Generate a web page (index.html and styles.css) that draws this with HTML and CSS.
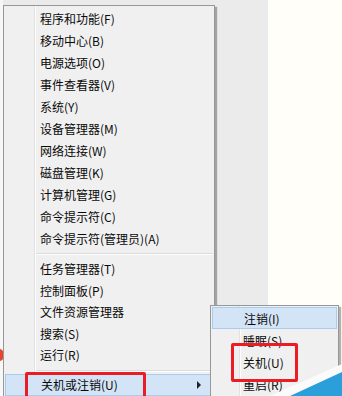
FILE: index.html
```html
<!DOCTYPE html>
<html lang="zh-CN">

<head>
    <meta charset="UTF-8">
    <meta name="viewport" content="width=device-width, initial-scale=1.0">
    <title>Win+X 菜单</title>
    <link rel="stylesheet" href="styles.css">
</head>

<body>
    <div class="screen">
        <span class="red-dot"></span>

        <!-- 主菜单 -->
        <div class="menu main-menu">
            <div class="group">
                <div class="item">程序和功能(F)</div>
                <div class="item">移动中心(B)</div>
                <div class="item">电源选项(O)</div>
                <div class="item">事件查看器(V)</div>
                <div class="item">系统(Y)</div>
                <div class="item">设备管理器(M)</div>
                <div class="item">网络连接(W)</div>
                <div class="item">磁盘管理(K)</div>
                <div class="item">计算机管理(G)</div>
                <div class="item">命令提示符(C)</div>
                <div class="item">命令提示符(管理员)(A)</div>
            </div>
            <div class="sep"></div>
            <div class="group tight">
                <div class="item">任务管理器(T)</div>
                <div class="item">控制面板(P)</div>
                <div class="item">文件资源管理器</div>
                <div class="item">搜索(S)</div>
                <div class="item">运行(R)</div>
            </div>
            <div class="sep short"></div>
            <div class="item active">关机或注销(U)<span class="arrow"></span></div>
        </div>

        <!-- 子菜单 -->
        <div class="menu sub-menu">
            <div class="item active">注销(I)</div>
            <div class="item">睡眠(S)</div>
            <div class="item">关机(U)</div>
            <div class="item">重启(R)</div>
        </div>

        <!-- 红框标记 -->
        <div class="mark mark-main"></div>
        <div class="mark mark-sub"></div>

        <svg class="corner" width="72" height="34" viewBox="0 0 72 34">
            <polygon points="0,34 72,2 72,34" fill="#fbfbfb" />
            <polygon points="20,34 72,10 72,34" fill="#2b9fd9" />
        </svg>
    </div>
</body>

</html>
```

FILE: styles.css
```css
body {
    margin: 0;
    padding: 0;
    font-family: "Noto Sans CJK SC", "Noto Sans", sans-serif;
    font-size: 12px;
    color: #0a0a0a;
}

.screen {
    position: relative;
    width: 342px;
    height: 396px;
    overflow: hidden;
    background: linear-gradient(to right, #f7f7f7 0 3px, #ebebeb 3px 268px, #fffef8 268px);
}

.red-dot {
    position: absolute;
    left: -5px;
    top: 349px;
    width: 9px;
    height: 12px;
    border-radius: 50%;
    background: #e9442c;
}

.menu {
    position: absolute;
    box-sizing: border-box;
    border: 1px solid #979797;
    padding-top: 1px;
    box-shadow: 2px 2px 1px rgba(0, 0, 0, 0.3);
}

.main-menu {
    left: 3px;
    top: 5px;
    width: 212px;
    height: 420px;
    padding-right: 1px;
    background: linear-gradient(to right, #f0f0f0 30px, #e2e2e2 30px 31px, #fcfcfc 31px 32px, #f0f0f0 32px);
}

.sub-menu {
    left: 210px;
    top: 305px;
    width: 129px;
    height: 120px;
    background: linear-gradient(to right, #f0f0f0 28px, #e2e2e2 28px 29px, #fcfcfc 29px 30px, #f0f0f0 30px);
}

.item {
    display: flex;
    align-items: center;
    height: 22px;
    padding-left: 36px;
    white-space: nowrap;
}

.tight .item {
    height: 21.5px;
}

.sub-menu .item {
    padding-left: 32px;
}

.item.active {
    box-sizing: border-box;
    margin: 0 1px;
    padding-left: 35px;
    background: #d3e4f6;
    border: 1px solid #a9cbee;
}

.sub-menu .item.active {
    padding-left: 31px;
}

.sep {
    height: 9px;
    margin-left: 32px;
    background: linear-gradient(to bottom, transparent 4px, #dcdcdc 4px 5px, #fdfdfd 5px 6px, transparent 6px);
}

.sep.short {
    height: 8px;
}

.arrow {
    margin-left: auto;
    margin-right: 10px;
    width: 0;
    height: 0;
    border-top: 4px solid transparent;
    border-bottom: 4px solid transparent;
    border-left: 4px solid #222;
}

.mark {
    position: absolute;
    box-sizing: border-box;
    border: 3px solid #ec1c24;
    border-radius: 2px;
}

.mark-main {
    left: 25px;
    top: 372px;
    width: 121px;
    height: 30px;
}

.mark-sub {
    left: 231px;
    top: 343px;
    width: 67px;
    height: 39px;
}

.corner {
    position: absolute;
    right: 0;
    bottom: 0;
    display: block;
}
```
